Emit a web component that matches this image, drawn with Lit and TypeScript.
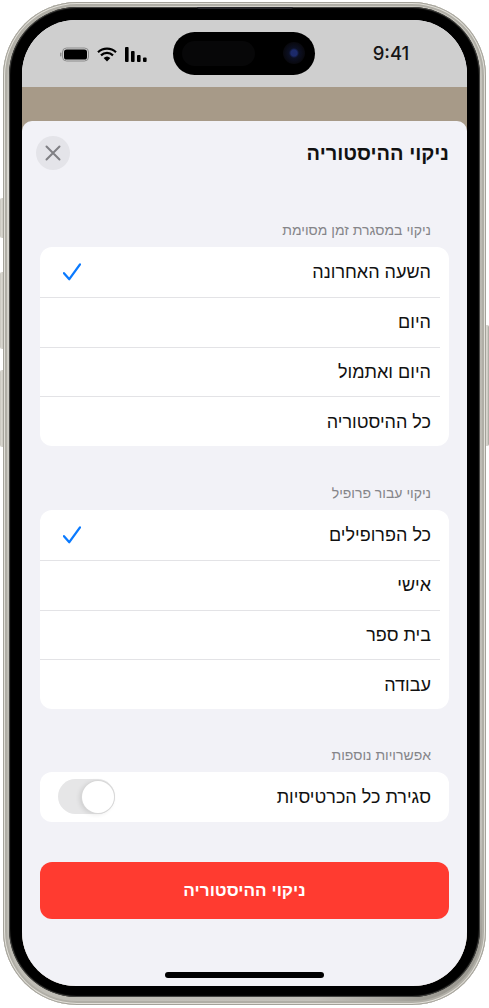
import { LitElement, html, css } from "lit";
import { customElement } from "lit/decorators.js";

const check = html`<svg class="check" viewBox="0 0 18 18" width="18" height="18" aria-hidden="true"><path d="M1 10.2 L6.3 16.2 L17 1.4" fill="none" stroke="#0a7aff" stroke-width="2.3" stroke-linecap="round" stroke-linejoin="round"/></svg>`;

@customElement("app-root")
export class AppRoot extends LitElement {
  static styles = css`
    :host { display: block; width: 489px; height: 1008px; background: #fff; overflow: hidden; font-family: "Liberation Sans", Arial, sans-serif; }
    .stage { position: relative; width: 489px; height: 1008px; padding: 2px 3px 3px; box-sizing: border-box; }
    .hw { position: absolute; background: linear-gradient(90deg, #c6c4bc, #dedcd5 50%, #a09e96); }
    .h1 { left: 0; top: 198px; width: 4px; height: 40px; border-radius: 2px 0 0 2px; }
    .h2 { left: 0; top: 272px; width: 4px; height: 77px; border-radius: 2px 0 0 2px; }
    .h3 { left: 0; top: 370px; width: 4px; height: 77px; border-radius: 2px 0 0 2px; }
    .h4 { right: 0; top: 325px; width: 4px; height: 121px; border-radius: 0 2px 2px 0; }
    .body { position: relative; height: 100%; box-sizing: border-box; padding: 5px 6px 8px; border-radius: 74px; background: linear-gradient(135deg, #a5a39b, #d9d7d0 12%, #bab8b0 50%, #c4c2bb 88%, #8a8880); box-shadow: inset 0 0 0 1px #a4a29a, inset 0 0 0 2px #e2e0d9, inset 0 0 0 4px #b0aea6; }
    .bezel { position: relative; height: 100%; box-sizing: border-box; padding: 13px 13px 11px; border-radius: 68px; background: #000; box-shadow: inset 0 0 1px 1px #4a4a47; }
    .speaker { position: absolute; top: 0; left: 188px; width: 96px; height: 2px; border-radius: 0 0 2px 2px; background: #26262a; }
    .screen { height: 100%; border-radius: 54px; overflow: hidden; background: #f2f2f7; display: flex; flex-direction: column; }
    .status { height: 67px; flex: none; background: #cfcfcf; display: flex; align-items: center; padding: 2px 0 0 38px; box-sizing: border-box; }
    .icons { display: flex; align-items: center; width: 113px; flex: none; }
    .icons svg { display: block; flex: none; }
    .battery { margin-right: 8px; }
    .wifi { margin-right: 8px; }
    .island { width: 142px; height: 43px; flex: none; background: #000; border-radius: 22px; display: flex; align-items: center; justify-content: space-between; padding: 0 10px 0 9px; box-sizing: border-box; margin-top: -3px; }
    .sensor { width: 73px; height: 25px; border-radius: 13px; background: #070708; }
    .cam { width: 22px; height: 22px; border-radius: 50%; background: radial-gradient(circle, #1c2a6b 0 3px, #0c1024 5px, #08080d 11px); }
    .time { flex: 1; text-align: center; font-family: Inter, "Liberation Sans", sans-serif; font-size: 18.5px; font-weight: 500; color: #151515; margin-top: -3px; }
    .tan { height: 34px; flex: none; background: #a79a88; }
    .sheet { flex: 1; background: #f2f2f7; border-radius: 10px 10px 0 0; padding: 15px 18px 8px; direction: rtl; display: flex; flex-direction: column; min-height: 0; }
    .tan-wrap { background: #a79a88; flex: 1; display: flex; flex-direction: column; min-height: 0; }
    .head { display: flex; align-items: center; justify-content: space-between; height: 34px; flex: none; }
    h1 { margin: 0; font-size: 20px; font-weight: 700; color: #111; }
    .close { width: 34px; height: 34px; border-radius: 50%; background: #e4e4e9; display: flex; align-items: center; justify-content: center; margin-left: -4px; }
    .label { margin: 0; padding: 0 18px; font-size: 14px; line-height: 18px; color: #858589; }
    .first { margin-top: 51px; }
    .next { margin-top: 37.8px; }
    .third { margin-top: 36.8px; }
    .card { background: #fff; border-radius: 12px; margin-top: 8px; flex: none; }
    .row { height: 49.8px; box-sizing: border-box; padding: 2px 18px 0; display: flex; align-items: center; justify-content: space-between; font-size: 18px; color: #111; position: relative; }
    .row + .row::before { content: ""; position: absolute; top: 0; left: 0; right: 9px; height: 1px; background: #e3e3e6; }
    .check { margin: -2px 5px 0 0; margin-left: 5px; margin-right: 0; flex: none; }
    .toggle { width: 57px; height: 35px; margin-top: -2px; border-radius: 18px; background: #e6e6e7; flex: none; display: flex; justify-content: flex-start; align-items: center; padding: 0 1px; box-sizing: border-box; }
    .knob { width: 32px; height: 32px; border-radius: 50%; background: #fff; box-shadow: 0 0 0 1px #d8d8d8, -2px 1px 5px rgba(0,0,0,.12); }
    .btn { margin-top: 40.2px; height: 57px; flex: none; background: #ff3b30; border-radius: 12px; color: #fff; font-size: 17.2px; font-weight: 700; display: flex; align-items: center; justify-content: center; }
    .home { width: 159px; height: 6px; border-radius: 3px; background: #000; align-self: center; margin-top: auto; flex: none; }
  `;

  render() {
    const rows1 = ["השעה האחרונה", "היום", "היום ואתמול", "כל ההיסטוריה"];
    const rows2 = ["כל הפרופילים", "אישי", "בית ספר", "עבודה"];
    const row = (t: string, i: number) => html`<div class="row"><span>${t}</span>${i === 0 ? check : ""}</div>`;
    return html`
      <div class="stage">
        <div class="hw h1"></div><div class="hw h2"></div><div class="hw h3"></div><div class="hw h4"></div>
        <div class="body"><div class="bezel"><div class="speaker"></div><div class="screen">
          <div class="status">
            <div class="icons">
              <svg class="battery" width="29" height="15" viewBox="0 0 29 15"><rect x="2.5" y="1" width="26" height="13" rx="4" fill="none" stroke="#8c8c8c" stroke-width="1"/><rect x="4" y="2.5" width="23" height="10" rx="2.6" fill="#000"/><rect x="0" y="5.5" width="1.4" height="4" rx=".7" fill="#8c8c8c"/></svg>
              <svg class="wifi" width="20" height="15" viewBox="0 0 20 15"><path d="M1 5.2 A13 13 0 0 1 19 5.2 M4 8.4 A8.6 8.6 0 0 1 16 8.4" fill="none" stroke="#000" stroke-width="2.2"/><path d="M10 14.6 L6.6 11 A5 5 0 0 1 13.4 11 Z" fill="#000"/></svg>
              <svg width="22" height="15" viewBox="0 0 22 15"><rect x="0" y="0" width="3.6" height="15" rx="1" fill="#000"/><rect x="6" y="4" width="3.6" height="11" rx="1" fill="#000"/><rect x="12" y="8" width="3.6" height="7" rx="1" fill="#000"/><rect x="18" y="10.5" width="3.6" height="4.5" rx="1" fill="#000"/></svg>
            </div>
            <div class="island"><div class="sensor"></div><div class="cam"></div></div>
            <div class="time">9:41</div>
          </div>
          <div class="tan-wrap"><div class="tan"></div>
            <div class="sheet">
              <div class="head">
                <h1>ניקוי ההיסטוריה</h1>
                <div class="close"><svg width="16" height="16" viewBox="0 0 16 16"><path d="M1.5 1.5 L14.5 14.5 M14.5 1.5 L1.5 14.5" stroke="#7f7f84" stroke-width="2" stroke-linecap="round"/></svg></div>
              </div>
              <p class="label first">ניקוי במסגרת זמן מסוימת</p>
              <div class="card">${rows1.map(row)}</div>
              <p class="label next">ניקוי עבור פרופיל</p>
              <div class="card">${rows2.map(row)}</div>
              <p class="label third">אפשרויות נוספות</p>
              <div class="card"><div class="row"><span>סגירת כל הכרטיסיות</span><div class="toggle"><div class="knob"></div></div></div></div>
              <div class="btn">ניקוי ההיסטוריה</div>
              <div class="home"></div>
            </div>
          </div>
        </div></div></div>
      </div>
    `;
  }
}
